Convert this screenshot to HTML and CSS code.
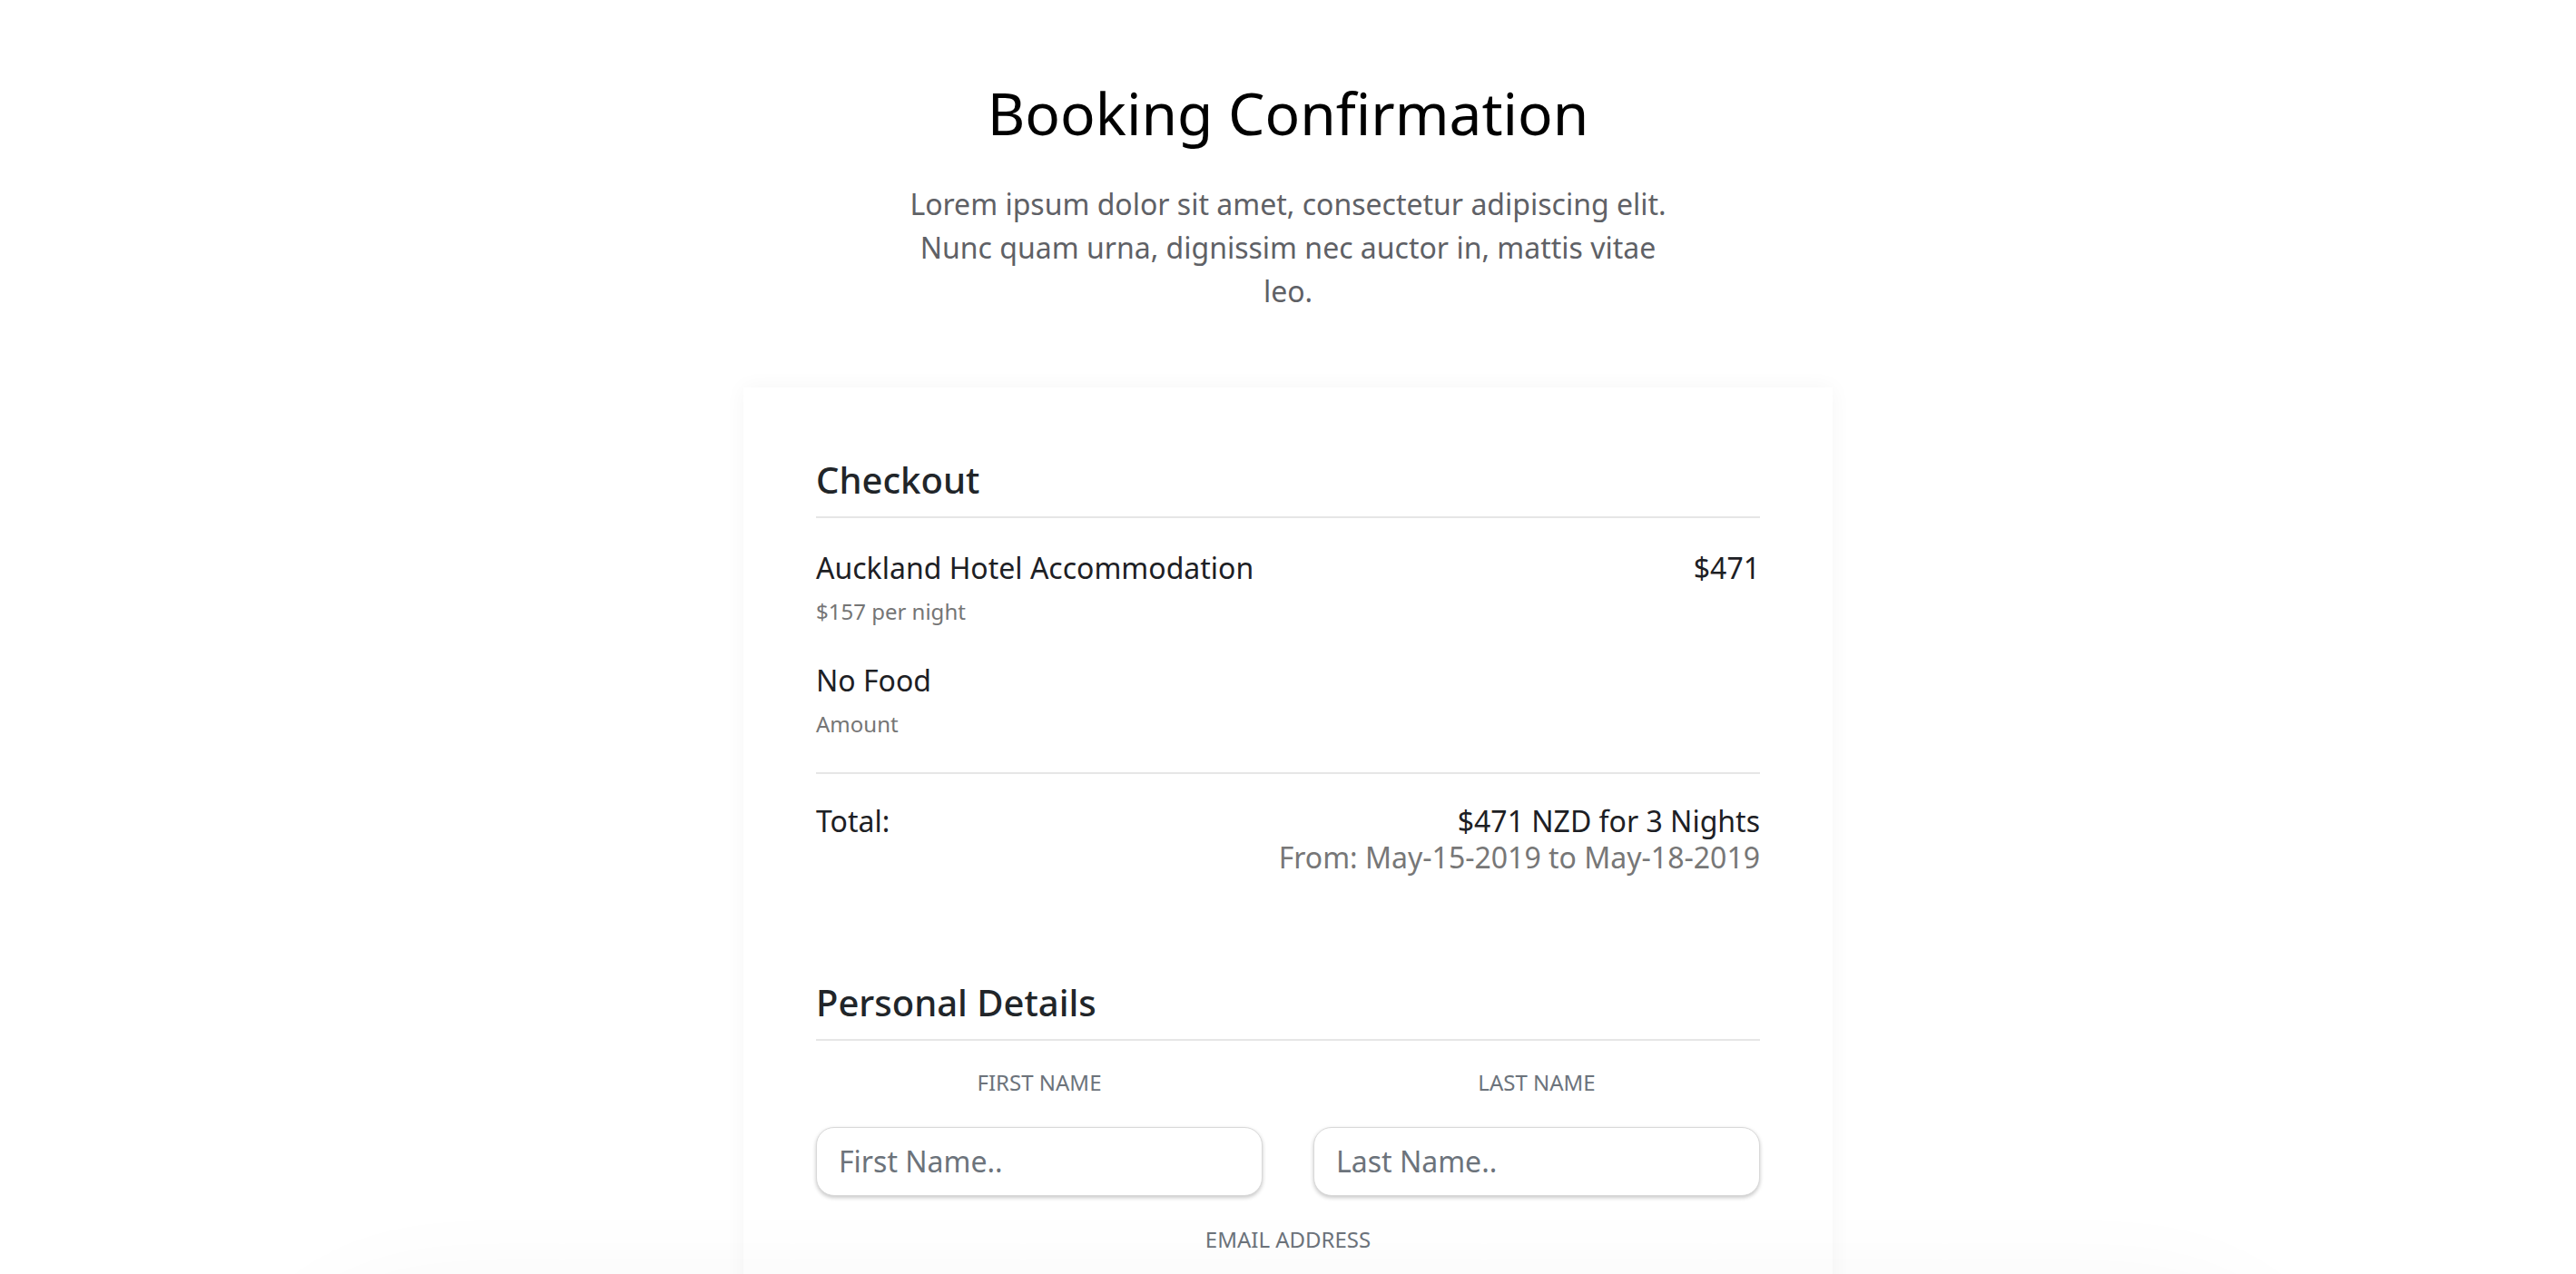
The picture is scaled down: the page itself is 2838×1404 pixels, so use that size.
FILE: index.html
```html
<!DOCTYPE html>
<html lang="en">
<head>
<meta charset="utf-8">
<title>Booking Confirmation</title>
<link rel="stylesheet" href="styles.css">
</head>
<body>
<main class="page">
  <header class="intro">
    <h1 class="title">Booking Confirmation</h1>
    <p class="lead">Lorem ipsum dolor sit amet, consectetur adipiscing elit. Nunc quam urna, dignissim nec auctor in, mattis vitae leo.</p>
  </header>

  <section class="card">
    <h4 class="section-title">Checkout</h4>
    <div class="items">
      <div class="item">
        <div class="item-main">
          <div class="item-name">Auckland Hotel Accommodation</div>
          <div class="item-sub">$157 per night</div>
        </div>
        <div class="item-price">$471</div>
      </div>
      <div class="item">
        <div class="item-main">
          <div class="item-name">No Food</div>
          <div class="item-sub">Amount</div>
        </div>
      </div>
    </div>
    <div class="total">
      <div class="total-label">Total:</div>
      <div class="total-value">
        <div class="total-amount">$471 NZD for 3 Nights</div>
        <div class="total-dates">From: May-15-2019 to May-18-2019</div>
      </div>
    </div>

    <h4 class="section-title section-gap">Personal Details</h4>
    <div class="form-row">
      <div class="field">
        <label class="field-label" for="first">First Name</label>
        <input class="input" id="first" type="text" placeholder="First Name..">
      </div>
      <div class="field">
        <label class="field-label" for="last">Last Name</label>
        <input class="input" id="last" type="text" placeholder="Last Name..">
      </div>
    </div>
    <div class="field field-full">
      <label class="field-label" for="email">Email Address</label>
    </div>
  </section>
</main>
<div class="bottom-shade"></div>
</body>
</html>
```

FILE: styles.css
```css
* { box-sizing: border-box; }

html, body {
  margin: 0;
  padding: 0;
  background: #ffffff;
}

body {
  font-family: "Noto Sans", "Open Sans", sans-serif;
  color: #212529;
  overflow: hidden;
  height: 1404px;
}

.page {
  display: flex;
  flex-direction: column;
  align-items: center;
  padding-top: 87px;
}

.intro {
  display: flex;
  flex-direction: column;
  align-items: center;
  text-align: center;
}

.title {
  margin: 0;
  font-size: 64px;
  font-weight: 400;
  line-height: 1.2;
  color: #000000;
}

.lead {
  margin: 37px 0 0;
  max-width: 850px;
  font-size: 32px;
  line-height: 48px;
  color: #5f6166;
}

.card {
  margin-top: 82px;
  width: 1200px;
  background: #ffffff;
  padding: 78px 80px 80px;
  box-shadow: 0 0 22px rgba(0, 0, 0, 0.045);
}

.section-title {
  margin: 0;
  font-size: 40px;
  font-weight: 500;
  line-height: 48px;
  padding-bottom: 16px;
  border-bottom: 2px solid #e6e6e6;
  color: #212529;
}

.section-gap {
  margin-top: 116px;
}

.items {
  padding: 31px 0 35px;
  display: flex;
  flex-direction: column;
  gap: 34px;
  border-bottom: 2px solid #e6e6e6;
}

.item {
  display: flex;
  justify-content: space-between;
  align-items: flex-start;
}

.item-name,
.item-price {
  font-size: 32px;
  line-height: 48px;
  color: #1d2024;
}

.item-sub {
  margin-top: 6px;
  font-size: 24px;
  line-height: 36px;
  color: #757575;
}

.total {
  display: flex;
  justify-content: space-between;
  align-items: flex-start;
  padding-top: 32px;
  font-size: 32px;
  line-height: 40px;
}

.total-label,
.total-amount {
  color: #1d2024;
}

.total-value {
  text-align: right;
}

.total-dates {
  color: #777777;
}

.form-row {
  display: grid;
  grid-template-columns: minmax(0, 1fr) minmax(0, 1fr);
  column-gap: 56px;
  margin-top: 28px;
}

.field {
  display: flex;
  flex-direction: column;
  align-items: stretch;
  min-width: 0;
}

.field-label {
  text-align: center;
  text-transform: uppercase;
  font-size: 24px;
  line-height: 36px;
  color: #6c737b;
  margin-bottom: 31px;
}

.input {
  width: 100%;
  min-width: 0;
  height: 76px;
  border: 1px solid #d9d9d9;
  border-radius: 20px;
  padding: 0 24px;
  font-family: "Noto Sans", "Open Sans", sans-serif;
  font-size: 32px;
  color: #495057;
  background: #ffffff;
  box-shadow: 0 2px 4px rgba(0, 0, 0, 0.22);
  outline: none;
}

.input::placeholder {
  color: #6c737b;
  opacity: 1;
}

.field-full {
  margin-top: 30px;
}

.bottom-shade {
  position: fixed;
  left: 330px;
  right: 330px;
  top: 1460px;
  height: 300px;
  border-radius: 300px;
  box-shadow: 0 0 120px 40px rgba(0, 0, 0, 0.04);
  pointer-events: none;
}
```
